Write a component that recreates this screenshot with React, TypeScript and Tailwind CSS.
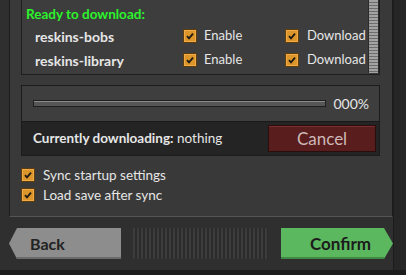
const Check = () => (
	<div className="w-[14px] h-[14px] shrink-0 bg-[#dc952a] border border-[#5e3d10] shadow-[inset_0_0_0_1px_#eeab46] flex items-center justify-center">
		<svg width="10" height="10" viewBox="0 0 10 10">
			<path d="M2 5.2 L4 7.4 L8 2.6" fill="none" stroke="#1e1a14" strokeWidth="1.8" />
		</svg>
	</div>
);

const Row = ({ name }: { name: string }) => (
	<div className="flex items-center h-[24px]">
		<p className="w-[157px] pl-[9px] font-bold text-[14px] text-[#e6e6e6]">{name}</p>
		<Check />
		<p className="w-[88px] pl-[7px] text-[13px] text-[#e6e6e6]">Enable</p>
		<Check />
		<p className="pl-[8px] text-[13px] text-[#e6e6e6]">Download</p>
	</div>
);

const App = () => {
	return (
		<div className="relative w-[406px] h-[275px] overflow-hidden bg-[#2f2f2f] flex font-['Lato',sans-serif]">
			<div className="w-[393px] flex flex-col">
				<div className="ml-[9px] w-[384px] h-[217px] bg-[#393939] border-l border-[#1c1c1c] border-r border-b border-b-[#555] pl-[11px] pr-[12px] flex flex-col">
					<div className="h-[75px] flex bg-[#3d3d3d] border-l border-b border-r border-[#1e1e1e]">
						<div className="flex-1 flex flex-col pl-[4px]">
							<p className="h-[24px] pt-[4px] font-bold text-[13.5px] text-[#2cf22c]">Ready to download:</p>
							<Row name="reskins-bobs" />
							<Row name="reskins-library" />
						</div>
						<div className="w-[11px] h-[73px] border-x border-[#2a2a2a] bg-[repeating-linear-gradient(to_bottom,#a2a2a2_0px,#a2a2a2_2px,#6c6c6c_2px,#6c6c6c_3px)]" />
					</div>
					<div className="mt-[10px] h-[71px] border border-[#1c1c1c] flex flex-col">
						<div className="h-[35px] bg-[#3e3e3e] flex items-center pl-[11px] pr-[10px]">
							<div className="w-[293px] h-[7px] bg-[#565656] border border-[#1e1e1e] shadow-[inset_0_1px_0_#8a8a8a]" />
							<p className="ml-auto text-[14px] text-[#e6e6e6]">000%</p>
						</div>
						<div className="flex-1 bg-[#242424] border-t border-[#1a1a1a] flex items-center pl-[11px] pr-[3px]">
							<p className="text-[13.5px] text-[#e6e6e6]">
								<span className="font-bold">Currently downloading:</span> nothing
							</p>
							<div className="ml-auto w-[108px] h-[27px] bg-[#5a1d1d] border border-[#2a0d0d] shadow-[inset_0_1px_0_#7a3030] flex items-center justify-center">
								<span className="text-[17px] text-[#cdb8b8]">Cancel</span>
							</div>
						</div>
					</div>
					<div className="mt-[12px] h-[14px] flex items-center gap-[8px]">
						<Check />
						<p className="text-[13.5px] text-[#e6e6e6]">Sync startup settings</p>
					</div>
					<div className="mt-[6px] h-[14px] flex items-center gap-[8px]">
						<Check />
						<p className="text-[13.5px] text-[#e6e6e6]">Load save after sync</p>
					</div>
				</div>
				<div className="mt-[11px] h-[31px] flex">
					<div className="ml-[9px] w-[112px] bg-[#8d8d8d] shadow-[inset_0_-2px_0_#6a6a6a] [clip-path:polygon(8px_0,100%_0,100%_100%,8px_100%,0_50%)] flex items-center pl-[21px]">
						<span className="font-bold text-[16px] text-[#222]">Back</span>
					</div>
					<div className="ml-[12px] w-[135px] bg-[repeating-linear-gradient(to_right,#3c3c3c_0px,#3c3c3c_2px,#2b2b2b_2px,#2b2b2b_4px)]" />
					<div className="ml-[13px] w-[112px] bg-[#5bb85f] shadow-[inset_0_-2px_0_#3f8a42] [clip-path:polygon(0_0,calc(100%-9px)_0,100%_50%,calc(100%-9px)_100%,0_100%)] flex items-center pl-[29px]">
						<span className="font-bold text-[17px] text-[#1c1c1c]">Confirm</span>
					</div>
				</div>
			</div>
			<div className="flex-1 bg-[#262626] border-l border-[#1c1c1c]" />
			<div className="absolute left-0 right-0 bottom-0 h-[5px] bg-[#1c1c1c]" />
		</div>
	);
};

export default App;
